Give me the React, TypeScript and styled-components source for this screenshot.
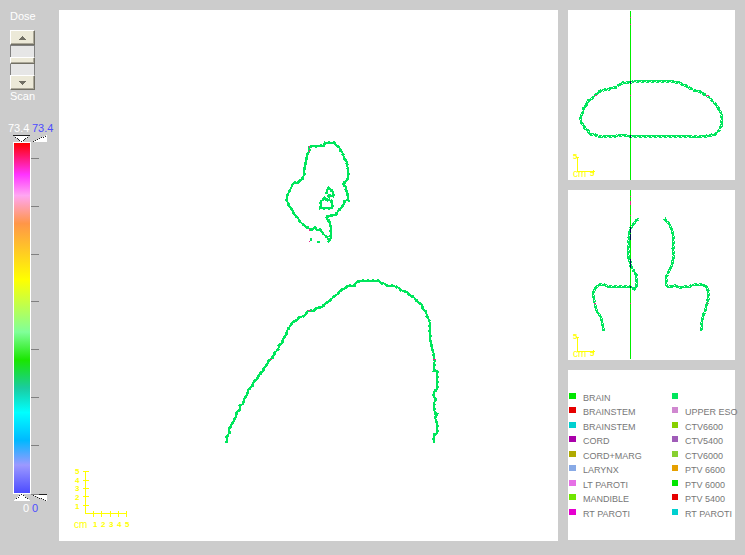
import React from "react";
import styled, { createGlobalStyle } from "styled-components";

const GlobalStyle = createGlobalStyle`
  * { box-sizing: border-box; }
  body {
    margin: 0;
    background: #cccccc;
    font-family: "Liberation Sans", Arial, sans-serif;
    font-size: 11px;
    line-height: 12px;
  }
`;

const CONTOUR = "#00e65c";
const BEAM = "#00ee00";
const MARK = "#e6288c";
const NAVY = "#001850";
const SCALE = "#ffff00";

const Page = styled.main`
  display: grid;
  grid-template-columns: 59px minmax(0, 499fr) 10px minmax(0, 167fr);
  align-items: start;
  padding: 10px 10px 10px 0;
`;

const Sidebar = styled.aside`
  display: flex;
  flex-direction: column;
  align-items: flex-start;
  color: #ffffff;
`;

const DoseControl = styled.div`
  display: flex;
  flex-direction: column;
  gap: 0;
  padding-left: 10px;
`;

const Caption = styled.label`
  display: block;
`;

const Scroller = styled.div`
  display: flex;
  flex-direction: column;
  width: 25px;
  height: 60px;
  margin-top: 8px;
  background: #e6e6e6;
`;

const StepButton = styled.button`
  display: flex;
  align-items: center;
  justify-content: center;
  height: 15px;
  padding: 0;
  border: 1px solid;
  border-color: #ffffff #716f64 #716f64 #ffffff;
  border-radius: 0;
  background: #ece9d8;
  box-shadow: inset -1px -1px 0 #aca899;
`;

const DoseRange = styled.input`
  appearance: none;
  writing-mode: vertical-lr;
  width: 25px;
  height: 30px;
  margin: 0;
  background: #e6e6e6;
  border: solid #808080;
  border-width: 1px 1px 0;
  &::-webkit-slider-thumb {
    appearance: none;
    width: 25px;
    height: 7px;
    background: #ece9d8;
    border: 1px solid;
    border-color: #ffffff #716f64 #716f64 #ffffff;
    box-shadow: inset -1px -1px 0 #aca899;
  }
`;

const Reading = styled.div<{ $end?: boolean }>`
  display: grid;
  grid-template-columns: 21px 21px;
  column-gap: 3px;
  padding-left: 8px;
  margin-top: ${(p) => (p.$end ? 0 : 20)}px;
`;

const Value = styled.output<{ $blue?: boolean; $right?: boolean }>`
  color: ${(p) => (p.$blue ? "#4c4cff" : "#ffffff")};
  text-align: ${(p) => (p.$right ? "right" : "left")};
`;

const Handle = styled.svg`
  display: block;
  width: 36px;
  height: 8px;
  margin-left: 12px;
`;

const ColourScale = styled.div`
  display: flex;
  margin-left: 13px;
`;

const ColourBar = styled.div`
  width: 18px;
  height: 352px;
  border: 1px solid #ffffff;
  background: linear-gradient(
    to bottom,
    #ff0000 0%,
    #ff33ff 9%,
    #ffa6f2 15%,
    #ff9648 23%,
    #ffff00 39%,
    #80ff99 54%,
    #1ae600 62%,
    #1acca0 70%,
    #00ffff 77%,
    #00b8ff 85%,
    #9c99ff 92%,
    #4c4cff 100%
  );
  background-origin: content-box;
`;

const Ticks = styled.div`
  display: flex;
  flex-direction: column;
  justify-content: space-between;
  padding: 16px 0 48px;
`;

const Tick = styled.span`
  width: 8px;
  height: 1px;
  background: #808080;
`;

const SideViews = styled.div`
  display: grid;
  grid-column: 4;
  row-gap: 10px;
`;

const View = styled.svg`
  display: block;
  width: 100%;
  height: auto;
  background: #ffffff;
`;

const Digit = styled.text`
  font-family: "Liberation Sans", Arial, sans-serif;
  font-size: 8px;
  font-weight: 700;
  fill: ${SCALE};
`;

const Unit = styled.text`
  font-family: "Liberation Sans", Arial, sans-serif;
  font-size: 10px;
  fill: ${SCALE};
`;

const Legend = styled.div`
  display: grid;
  grid-template-columns: minmax(0, 103fr) minmax(0, 63fr);
  min-height: 170px;
  padding: 23px 0 17px 1px;
  background: #ffffff;
  color: #777777;
  font-size: 9px;
  line-height: 10px;
`;

const LegendColumn = styled.ul<{ $swatch: number }>`
  display: grid;
  grid-template-columns: ${(p) => p.$swatch}px auto;
  grid-template-rows: repeat(9, 1fr);
  column-gap: 7px;
  margin: 0;
  padding: 0;
  list-style: none;
`;

const LegendItem = styled.li`
  display: grid;
  grid-column: 1 / -1;
  grid-template-columns: subgrid;
  align-items: start;
  white-space: nowrap;
`;

const Swatch = styled.span<{ $colour: string }>`
  height: 6px;
  background: ${(p) => p.$colour};
`;

/* Contour points are stored in thirds of a view unit. */
const HEAD =
  "118,62 118,50 162,47 165,39 193,39 200,47 208,52 212,62 218,70 222,83 230,95 232,110 235,120 235,140 232,150 218,162 228,172 228,180 232,192 234,211 224,212 222,222 215,232 207,240 197,254 172,260 170,265 180,277 182,290 183,310 182,326 176,332 172,322 160,312 150,300 142,300 135,293 123,300 116,295 105,288 90,275 84,265 72,252 66,238 58,228 51,212 51,202 53,195 65,170 72,158 84,160 90,151 96,148 102,135 104,110 107,95 110,80 116,66 118,62";
const EAR = "170,192 170,180 176,174 181,179 188,184 190,200 180,196 178,201 172,195";
const CANAL = "150,236 152,230 152,215 158,210 163,203 171,210 183,212 187,222 187,234 148,235";
const TRUNK =
  "36,518 36,500 43,488 43,475 55,455 62,442 64,429 73,420 75,407 83,402 88,385 96,376 100,360 112,347 114,338 128,325 130,316 145,303 148,292 158,281 160,274 172,265 180,247 190,238 192,227 202,219 205,206 215,193 216,182 228,164 235,154 245,152 250,144 268,137 280,122 298,122 302,114 322,112 326,105 345,92 358,78 368,72 375,62 390,55 398,47 418,47 424,37 433,33 490,33 498,39 510,41 516,47 532,47 550,53 558,61 575,65 583,74 598,83 606,94 620,105 625,118 633,125 636,140 642,150 645,160 645,185 647,217 650,232 655,245 659,270 657,302 667,303 667,358 657,365 657,380 662,385 657,400 659,430 667,432 660,443 666,462 667,490 656,495 656,518";
const AXIAL =
  "227,247 240,244 350,244 358,247 373,247 380,253 392,257 400,263 412,267 420,272 440,277 450,285 460,290 468,299 480,310 488,322 495,333 501,345 501,375 495,382 492,392 480,403 455,408 430,411 412,411 400,409 227,409 208,406 190,406 180,409 160,409 130,410 120,404 105,402 98,391 90,385 85,375 79,368 77,350 82,340 85,325 93,317 100,302 110,296 122,285 132,275 142,271 160,268 182,262 195,253 205,248 227,247";
const CORONAL_LEFT =
  "252,102 244,106 235,118 227,130 223,145 221,170 220,190 220,215 226,232 228,246 235,255 243,268 246,290 246,303 238,312 228,306 160,306 150,300 135,299 122,308 115,322 116,340 120,360 126,378 137,395 142,415 146,437";
const CORONAL_RIGHT =
  "328,100 334,108 344,118 350,135 355,150 354,190 356,215 352,238 342,258 334,275 334,300 338,306 360,302 375,307 400,305 420,299 440,299 455,305 460,320 459,345 453,370 445,390 441,410 439,437";

function Contour({ points, hollow }: { points: string; hollow?: boolean }) {
  return (
    <g fill="none">
      <polyline points={points} stroke={CONTOUR} strokeWidth="6" />
      <polyline points={points} stroke={CONTOUR} strokeWidth="9" strokeDasharray={hollow ? "9 6" : "6 9"} />
      {hollow && <polyline points={points} stroke="#ffffff" strokeWidth="3" strokeDasharray="3 12" />}
    </g>
  );
}

function SmallScale() {
  return (
    <g>
      <path d="M9 147h1v14h17v1h-18zM8 147h3v1h-3zM25 160h1v3h-1z" fill={SCALE} shapeRendering="crispEdges" />
      <Digit x="5" y="149">5</Digit>
      <Unit x="5" y="167">cm</Unit>
      <Digit x="22" y="166">5</Digit>
    </g>
  );
}

function SagittalView() {
  return (
    <View viewBox="0 0 499 531" role="img" aria-label="Sagittal view">
      <g shapeRendering="crispEdges">
        <g transform="translate(211 120) scale(0.33333)">
          <Contour points={HEAD} />
          <Contour points={EAR} />
          <Contour points={CANAL} />
          <path d="M120 324h6v9h-6zM141 333h9v6h-9z" fill={CONTOUR} />
          <path d="M117 48h3v6h-3zM117 60h3v6h-3zM117 297h3v6h-3zM117 333h3v3h-3z" fill={MARK} />
        </g>
        <g transform="translate(156 260) scale(0.33333)">
          <Contour points={TRUNK} />
          <path d="M279 120h9v3h-9zM165 267h6v3h-6zM654 267h9v3h-9z" fill={MARK} />
        </g>
        <path
          d="M26 461v42h41M23 461h6M23 470h6M23 478h6M23 486h6M23 495h6M34 500v6M42 500v6M51 500v6M59 500v6M67 500v6"
          transform="translate(0.5 0.5)"
          fill="none"
          stroke={SCALE}
        />
      </g>
      {[464, 473, 481, 490, 499].map((y, i) => (
        <Digit key={y} x="16" y={y}>{5 - i}</Digit>
      ))}
      <Unit x="15" y="518">cm</Unit>
      {[34, 42, 50, 58, 66].map((x, i) => (
        <Digit key={x} x={x} y="517">{i + 1}</Digit>
      ))}
    </View>
  );
}

function AxialView() {
  return (
    <View viewBox="0 0 167 170" role="img" aria-label="Axial view">
      <g shapeRendering="crispEdges">
        <g transform="translate(-13 -10) scale(0.33333)">
          <Contour points={AXIAL} hollow />
          <path d="M225 33h3v507h-3z" fill={BEAM} />
          <path d="M225 243h3v9h-3zM225 405h3v9h-3z" fill={NAVY} />
          <path d="M225 51h3v3h-3zM225 72h3v3h-3zM225 285h3v3h-3zM120 285h6v3h-6zM453 285h9v3h-9z" fill={MARK} />
        </g>
      </g>
      <SmallScale />
    </View>
  );
}

function CoronalView() {
  return (
    <View viewBox="0 0 167 170" role="img" aria-label="Coronal view">
      <g shapeRendering="crispEdges">
        <g transform="translate(-13 -5) scale(0.33333)">
          <Contour points={CORONAL_LEFT} hollow />
          <Contour points={CORONAL_RIGHT} hollow />
          <path d="M225 15h3v507h-3z" fill={BEAM} />
          <path d="M225 126h3v18h-3zM225 147h3v18h-3zM225 222h3v27h-3zM225 303h3v6h-3z" fill={NAVY} />
          <path d="M225 33h3v3h-3zM225 48h3v12h-3zM225 90h3v3h-3zM225 354h3v3h-3zM117 354h6v3h-6zM456 354h3v3h-3z" fill={MARK} />
        </g>
      </g>
      <SmallScale />
    </View>
  );
}

const STRUCTURES: { swatch: number; items: [string, string][] }[] = [
  {
    swatch: 7,
    items: [
      ["#00e600", "BRAIN"],
      ["#e60000", "BRAINSTEM"],
      ["#00d0d0", "BRAINSTEM"],
      ["#aa00aa", "CORD"],
      ["#b0aa00", "CORD+MARG"],
      ["#88aae6", "LARYNX"],
      ["#e670e6", "LT PAROTI"],
      ["#70e600", "MANDIBLE"],
      ["#e600d0", "RT PAROTI"],
    ],
  },
  {
    swatch: 6,
    items: [
      ["#00e65c", ""],
      ["#d088d0", "UPPER ESO"],
      ["#88d000", "CTV6600"],
      ["#a05cb8", "CTV5400"],
      ["#88d030", "CTV6000"],
      ["#e6a000", "PTV 6600"],
      ["#00e600", "PTV 6000"],
      ["#e60000", "PTV 5400"],
      ["#00d0d0", "RT PAROTI"],
    ],
  },
];

export default function App() {
  return (
    <>
      <GlobalStyle />
      <Page>
        <Sidebar>
          <DoseControl>
            <Caption htmlFor="dose">Dose</Caption>
            <Scroller>
              <StepButton type="button" aria-label="Scan up">
                <svg width="7" height="4" shapeRendering="crispEdges">
                  <path d="M3 0h1v1h1v1h1v1h1v1H0V3h1V2h1V1h1z" fill="#716f64" />
                </svg>
              </StepButton>
              <DoseRange id="dose" type="range" defaultValue={50} />
              <StepButton type="button" aria-label="Scan down">
                <svg width="7" height="4" shapeRendering="crispEdges">
                  <path d="M0 0h7v1H6v1H5v1H4v1H3V3H2V2H1V1H0z" fill="#716f64" />
                </svg>
              </StepButton>
            </Scroller>
            <Caption htmlFor="dose">Scan</Caption>
          </DoseControl>
          <Reading>
            <Value>73.4</Value>
            <Value $blue>73.4</Value>
          </Reading>
          <Handle viewBox="0 0 36 8" shapeRendering="crispEdges">
            <path d="M1 1h17l-8 7h-1zM20 8L35 1v7z" fill="#ffffff" />
            <path d="M1 1h17v1H1z" fill="#202020" />
            <path d="M3 3h1v1H3zM5 4h1v1H5zM6 5h1v1H6zM7 6h1v1H7zM9 7h1v1H9zM11 6h1v1h-1zM12 5h1v1h-1zM13 4h1v1h-1zM15 3h1v1h-1zM21 7h1v1h-1zM23 6h1v1h-1zM25 5h1v1h-1zM27 4h1v1h-1zM29 3h1v1h-1zM31 3h1v1h-1zM33 2h1v1h-1z" fill="#202020" />
          </Handle>
          <ColourScale>
            <ColourBar />
            <Ticks>
              {[66, 57, 48, 39, 29, 20, 10].map((level) => (
                <Tick key={level} />
              ))}
            </Ticks>
          </ColourScale>
          <Handle viewBox="0 0 36 8" shapeRendering="crispEdges">
            <path d="M9 0h1l9 7H1zM19 0h16v7z" fill="#ffffff" />
            <path d="M27 0h8v1h-8z" fill="#202020" />
            <path d="M19 0h8v1h-8z" fill="#808080" />
            <path d="M9 0h1v1H9zM7 1h1v1H7zM11 1h1v1h-1zM6 3h1v1H6zM13 3h1v1h-1zM4 4h1v1H4zM15 4h1v1h-1zM21 1h1v1h-1zM23 2h1v1h-1zM25 3h1v1h-1zM27 4h1v1h-1zM29 4h1v1h-1zM31 5h1v1h-1zM33 6h1v1h-1z" fill="#202020" />
          </Handle>
          <Reading $end>
            <Value $right>0</Value>
            <Value $blue>0</Value>
          </Reading>
        </Sidebar>
        <SagittalView />
        <SideViews>
          <AxialView />
          <CoronalView />
          <Legend>
            {STRUCTURES.map(({ swatch, items }) => (
              <LegendColumn key={swatch} $swatch={swatch}>
                {items.map(([colour, name]) => (
                  <LegendItem key={colour}>
                    <Swatch $colour={colour} />
                    <span>{name}</span>
                  </LegendItem>
                ))}
              </LegendColumn>
            ))}
          </Legend>
        </SideViews>
      </Page>
    </>
  );
}
